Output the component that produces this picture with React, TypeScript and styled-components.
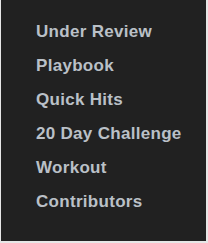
import React from 'react';
import styled, { createGlobalStyle } from 'styled-components';

const GlobalStyle = createGlobalStyle`
  html, body {
    margin: 0;
    padding: 0;
    background: #ffffff;
  }
`;

const Panel = styled.nav`
  box-sizing: border-box;
  width: 208px;
  height: 243px;
  background: #212121;
  border-left: 1px solid #e6e6e6;
  border-right: 2px solid #e6e6e6;
  border-bottom: 2px solid #e6e6e6;
  padding: 15px 0 0 35px;
`;

const MenuList = styled.ul`
  list-style: none;
  margin: 0;
  padding: 0;
`;

const MenuItem = styled.li`
  font-family: 'Liberation Sans', Arial, sans-serif;
  font-weight: 700;
  font-size: 17px;
  line-height: 34px;
  letter-spacing: 0.3px;
  color: #bac0c7;
  white-space: nowrap;
`;

const items = [
  'Under Review',
  'Playbook',
  'Quick Hits',
  '20 Day Challenge',
  'Workout',
  'Contributors',
];

export default function App() {
  return (
    <>
      <GlobalStyle />
      <Panel>
        <MenuList>
          {items.map((label) => (
            <MenuItem key={label}>{label}</MenuItem>
          ))}
        </MenuList>
      </Panel>
    </>
  );
}
